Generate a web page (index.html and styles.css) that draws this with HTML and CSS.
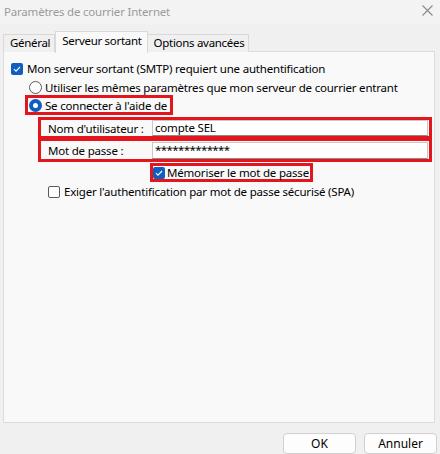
FILE: index.html
```html
<!DOCTYPE html>
<html lang="fr">
<head>
<meta charset="utf-8">
<title>Paramètres de courrier Internet</title>
<link rel="stylesheet" href="styles.css">
</head>
<body>
<div class="window">
  <div class="titlebar">
    <span class="title">Paramètres de courrier Internet</span>
    <svg class="close" width="11" height="11" viewBox="0 0 11 11"><path d="M0.5 0.5 L10.5 10.5 M10.5 0.5 L0.5 10.5" stroke="#8a8a8a" stroke-width="1.1" fill="none"/></svg>
  </div>
  <div class="tabs">
    <div class="tab">Général</div>
    <div class="tab active">Serveur sortant</div>
    <div class="tab">Options avancées</div>
  </div>
  <div class="panel">
    <label class="row r1"><span class="cb checked"><svg viewBox="0 0 12 12" width="12" height="12"><path d="M3 6.2 L5 8.2 L9 4" stroke="#fff" stroke-width="1.1" fill="none"/></svg></span>Mon serveur sortant (SMTP) requiert une authentification</label>
    <label class="row r2"><span class="radio"></span>Utiliser les mêmes paramètres que mon serveur de courrier entrant</label>
    <label class="row r3 hl"><span class="radio on"></span>Se connecter à l'aide de</label>
    <div class="field hl f1"><span class="flabel">Nom d'utilisateur :</span><span class="input">compte SEL</span></div>
    <div class="field hl f2"><span class="flabel">Mot de passe :</span><span class="input pw">*************</span></div>
    <label class="row r4 hl"><span class="cb checked"><svg viewBox="0 0 12 12" width="12" height="12"><path d="M3 6.2 L5 8.2 L9 4" stroke="#fff" stroke-width="1.1" fill="none"/></svg></span>Mémoriser le mot de passe</label>
    <label class="row r5"><span class="cb"></span>Exiger l'authentification par mot de passe sécurisé (SPA)</label>
  </div>
  <div class="buttons">
    <button class="btn">OK</button>
    <button class="btn">Annuler</button>
  </div>
</div>
</body>
</html>
```
FILE: styles.css
```css
* { box-sizing: border-box; }
html, body { margin: 0; padding: 0; }
body {
  width: 440px;
  height: 454px;
  background: #f0f0f0;
  font-family: "Noto Sans", "Segoe UI", sans-serif;
  font-size: 11.5px;
  letter-spacing: -0.2px;
  color: #000;
  overflow: hidden;
}
.titlebar {
  height: 24px;
  background: #f3f3f3;
  display: flex;
  align-items: center;
  justify-content: space-between;
  padding: 0 7px 2px 4px;
}
.title { color: #9b9b9b; }
.close { display: block; margin-top: -2px; }
.tabs {
  display: flex;
  align-items: flex-end;
  height: 28px;
  padding: 7px 0 0 3px;
  position: relative;
  z-index: 1;
}
.tab {
  height: 18px;
  line-height: 16px;
  padding: 0 4px 0 6px;
  border: 1px solid #d9d9d9;
  border-bottom: none;
  background: #f0f0f0;
  white-space: nowrap;
  letter-spacing: -0.3px;
}
.tab + .tab { border-left: none; }
.tab.active {
  height: 22px;
  margin-bottom: -1px;
  background: #f9f9f9;
  border: 1px solid #d9d9d9;
  border-bottom: none;
  line-height: 18px;
  padding: 0 5px 0 6px;
}
.tab.active + .tab { border-left: none; }
.panel {
  margin: -1px 5px 0 3px;
  height: 372px;
  background: #f9f9f9;
  border: 1px solid #dcdcdc;
  padding-top: 9px;
  display: flex;
  flex-direction: column;
  align-items: flex-start;
}
.row {
  display: flex;
  align-items: center;
  white-space: nowrap;
  height: 15px;
}
.r1 { margin-left: 7px; }
.r1 .cb { margin-right: 4px; }
.r2 { margin-left: 25px; margin-top: 4px; }
.r3 { margin-left: 21px; margin-top: 0; height: 20px; padding-left: 1px; padding-right: 3px; }
.hl { border: 3px solid #e3161e; }
.radio {
  width: 13px; height: 13px;
  border-radius: 50%;
  border: 1px solid #5a5a5a;
  background: #fff;
  margin-right: 3px;
  flex: none;
}
.radio.on {
  border: none;
  background: #0f5ec0;
  display: flex;
  align-items: center;
  justify-content: center;
}
.radio.on::after {
  content: "";
  width: 5px; height: 5px;
  border-radius: 50%;
  background: #fff;
}
.cb {
  width: 12px; height: 12px;
  border: 1px solid #5a5a5a;
  border-radius: 2px;
  background: #fff;
  margin-right: 4px;
  flex: none;
  display: flex;
}
.cb.checked { border: none; background: #0f5ec0; }
.cb svg { display: block; }
.field {
  display: flex;
  align-items: center;
  margin-left: 34px;
  width: 394px;
  white-space: nowrap;
}
.f1 { height: 22px; margin-top: 2px; }
.f2 { height: 24px; margin-top: -1px; }
.flabel { width: 111px; padding-left: 7px; flex: none; }
.input {
  flex: 1;
  margin-right: 1px;
  height: 16px;
  background: #fff;
  border: 1px solid #c8c8c8;
  border-bottom-color: #8a8a8a;
  padding-left: 2px;
  line-height: 14px;
}
.f2 .input { height: 17px; }
.pw { letter-spacing: -0.6px; }
.r4 { margin-left: 146px; height: 19px; margin-top: 1px; padding-right: 1px; }
.r4 .cb { margin-right: 2px; }
.r5 { margin-left: 44px; margin-top: 2px; }
.buttons {
  display: flex;
  justify-content: flex-end;
  gap: 8px;
  padding-right: 3px;
  margin-top: 10px;
}
.btn {
  width: 73px;
  height: 21px;
  background: #fdfdfd;
  border: 1px solid #d0d0d0;
  border-radius: 4px;
  font-family: inherit;
  font-size: 12px;
  color: #000;
  padding: 0;
}
```
